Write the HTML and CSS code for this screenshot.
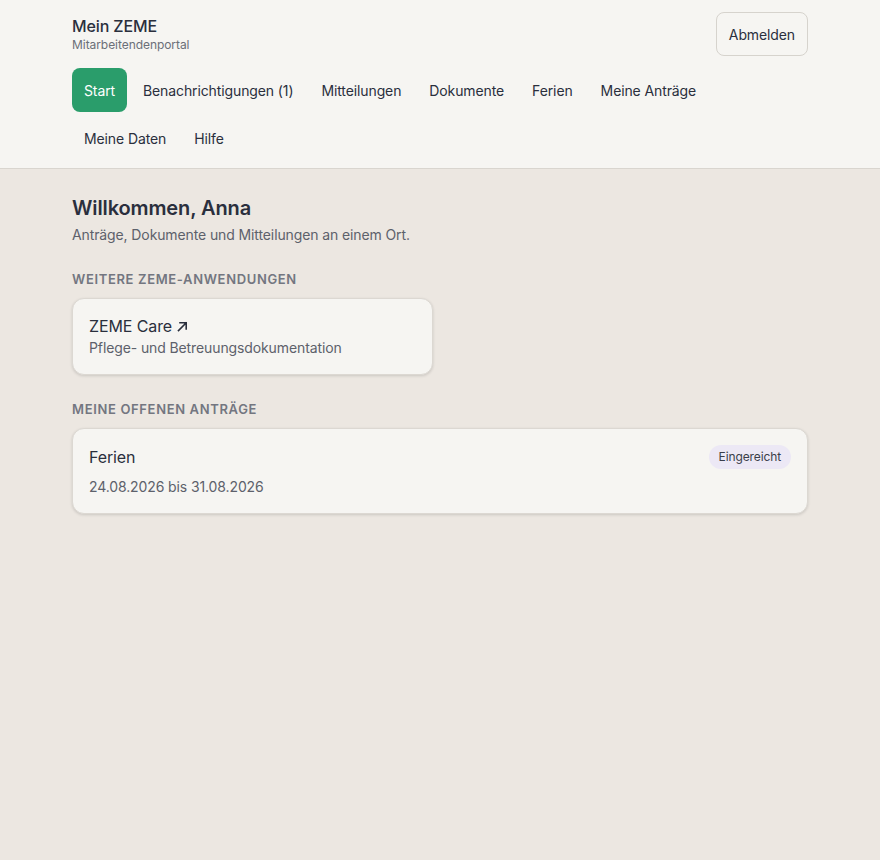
FILE: index.html
```html
<!DOCTYPE html>
<html lang="de">
<head>
<meta charset="utf-8">
<title>Mein ZEME</title>
<link rel="stylesheet" href="styles.css">
</head>
<body>
<header class="site-header">
  <div class="container">
    <div class="header-top">
      <div class="brand">
        <div class="brand-title">Mein ZEME</div>
        <div class="brand-sub">Mitarbeitendenportal</div>
      </div>
      <button class="btn-logout">Abmelden</button>
    </div>
    <nav class="nav">
      <a class="nav-item active">Start</a>
      <a class="nav-item">Benachrichtigungen (1)</a>
      <a class="nav-item">Mitteilungen</a>
      <a class="nav-item">Dokumente</a>
      <a class="nav-item">Ferien</a>
      <a class="nav-item">Meine Anträge</a>
      <a class="nav-item">Meine Daten</a>
      <a class="nav-item">Hilfe</a>
    </nav>
  </div>
</header>
<main class="container main">
  <h1 class="welcome">Willkommen, Anna</h1>
  <p class="lead">Anträge, Dokumente und Mitteilungen an einem Ort.</p>

  <h2 class="section-title">Weitere ZEME-Anwendungen</h2>
  <div class="app-grid">
    <a class="card app-card">
      <div class="card-title">ZEME Care <svg class="arrow" width="11" height="11" viewBox="0 0 11 11" aria-hidden="true"><path d="M1.5 9.5 L9 2 M3 1.8 H9.2 V8" fill="none" stroke="currentColor" stroke-width="1.6" stroke-linecap="square"/></svg></div>
      <div class="card-desc">Pflege- und Betreuungsdokumentation</div>
    </a>
  </div>

  <h2 class="section-title">Meine offenen Anträge</h2>
  <div class="card request-card">
    <div class="request-head">
      <div class="card-title">Ferien</div>
      <span class="badge">Eingereicht</span>
    </div>
    <div class="request-dates">24.08.2026 bis 31.08.2026</div>
  </div>
</main>
</body>
</html>
```
FILE: styles.css
```css
* { box-sizing: border-box; }
html, body { margin: 0; padding: 0; }
body {
  font-family: Inter, "Noto Sans", sans-serif;
  background: #ece7e1;
  color: #2a2f3d;
  min-height: 860px;
  letter-spacing: -0.007em;
}
.container {
  max-width: 768px;
  margin: 0 auto;
  padding: 0 16px;
}
.site-header {
  background: #f6f5f2;
  border-bottom: 1px solid #d9d5cf;
}
.header-top {
  display: flex;
  justify-content: space-between;
  align-items: flex-start;
  padding-top: 12px;
}
.brand { padding-top: 4px; }
.brand-title {
  font-size: 16px;
  font-weight: 500;
  line-height: 20px;
  color: #2a2f3d;
}
.brand-sub {
  font-size: 12px;
  line-height: 15px;
  color: #6b6f78;
  margin-top: 1px;
  letter-spacing: -0.005em;
}
.btn-logout {
  font-family: inherit;
  letter-spacing: inherit;
  font-size: 14px;
  color: #2a2f3d;
  background: #f6f5f2;
  border: 1px solid #d6d3cd;
  border-radius: 8px;
  height: 44px;
  padding: 0 12px;
}
.nav {
  display: flex;
  flex-wrap: wrap;
  column-gap: 4px;
  row-gap: 4px;
  padding: 12px 0 8px;
}
.nav-item {
  display: flex;
  align-items: center;
  height: 44px;
  padding: 0 12px;
  font-size: 14px;
  color: #2a2f3d;
  border-radius: 8px;
  text-decoration: none;
}
.nav-item.active {
  background: #2a9d6b;
  color: #ffffff;
}
.main {
  padding-top: 27px;
}
.welcome {
  font-size: 20px;
  font-weight: 600;
  line-height: 24px;
  margin: 0;
  color: #2a2f3d;
}
.lead {
  font-size: 14px;
  line-height: 20px;
  color: #5d616b;
  margin: 5px 0 0;
}
.section-title {
  font-size: 13px;
  font-weight: 600;
  text-transform: uppercase;
  letter-spacing: 0.05em;
  color: #737680;
  margin: 25px 0 10px;
  line-height: 18px;
}
.app-grid {
  display: grid;
  grid-template-columns: 1fr 1fr;
  gap: 14px;
}
.card {
  display: block;
  background: #f6f5f2;
  border: 1px solid #dcd8d2;
  border-radius: 12px;
  box-shadow: 0 1px 3px rgba(0,0,0,0.14);
  padding: 15px 16px;
  color: #2a2f3d;
}
.app-card { padding-bottom: 16px; }
.request-card { padding: 16px; }
.card-title {
  font-size: 16px;
  line-height: 24px;
  color: #2a2f3d;
}
.arrow { vertical-align: 0; margin-left: 1px; }
.card-desc {
  font-size: 14px;
  line-height: 20px;
  color: #5d616b;
}
.request-head {
  display: flex;
  justify-content: space-between;
  align-items: center;
}
.badge {
  background: #ece8f5;
  color: #3a3e4a;
  font-size: 12px;
  line-height: 16px;
  padding: 4px 10px;
  border-radius: 999px;
}
.request-dates {
  font-size: 14px;
  line-height: 20px;
  color: #5d616b;
  margin-top: 8px;
}
```
